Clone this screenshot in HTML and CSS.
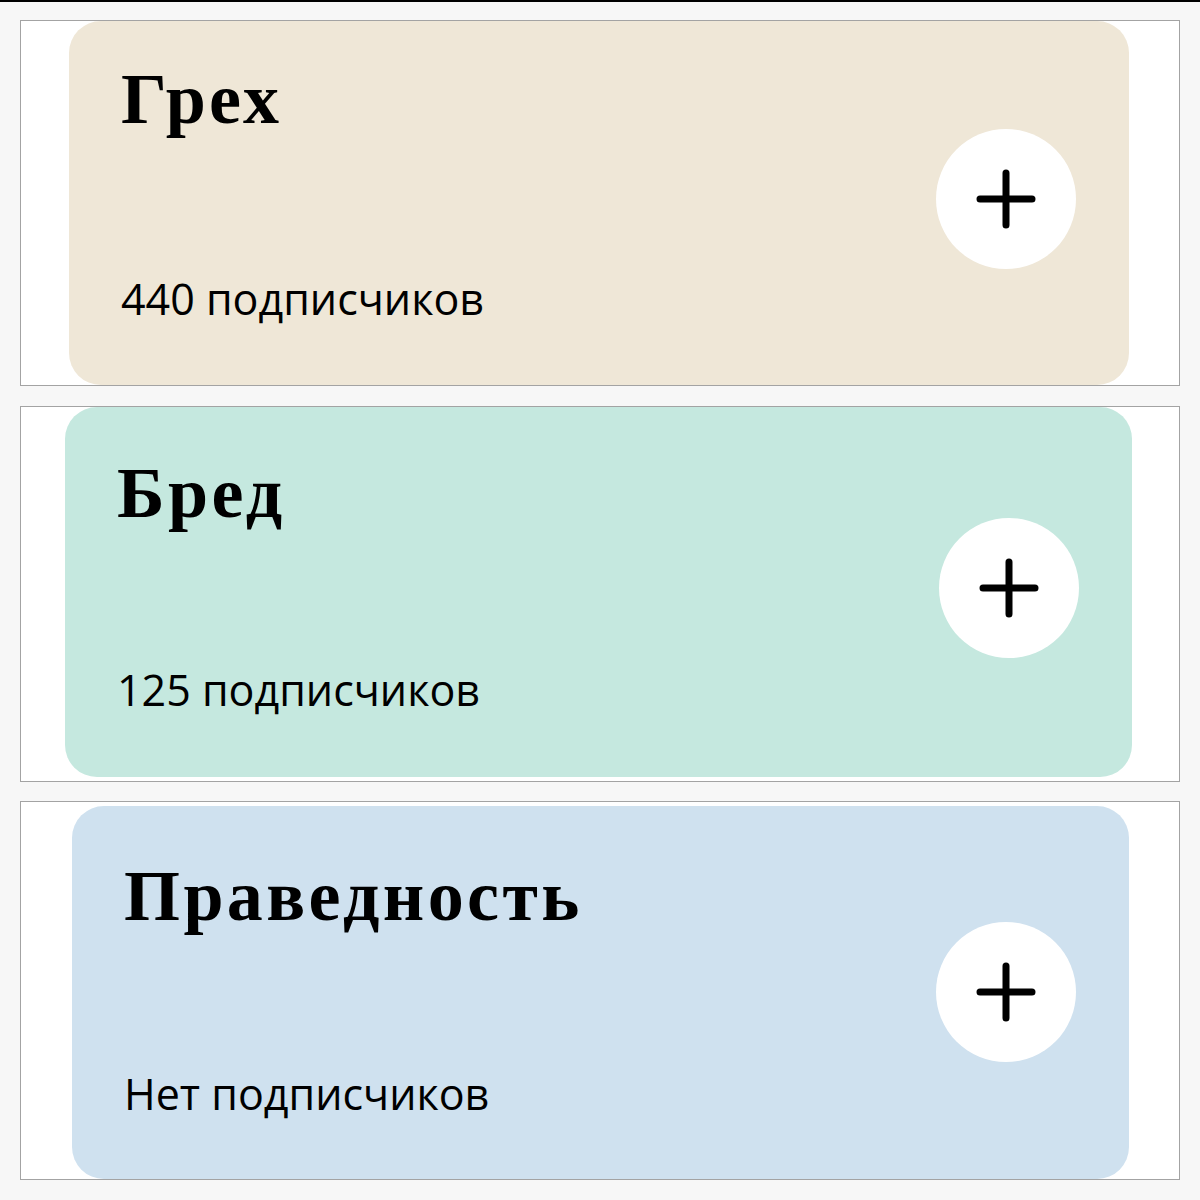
FILE: index.html
```html
<!DOCTYPE html>
<html lang="ru">
<head>
<meta charset="utf-8">
<title>Каналы</title>
<link rel="stylesheet" href="styles.css">
</head>
<body>
<main class="page">
  <section class="panel panel-1">
    <div class="card card-sin">
      <div class="info">
        <h2 class="title">Грех</h2>
        <p class="subs">440 подписчиков</p>
      </div>
      <button class="add" aria-label="Подписаться">
        <svg viewBox="0 0 60 60" width="60" height="60"><path d="M30 4V56M4 30H56" stroke="#000" stroke-width="7" stroke-linecap="round" fill="none"/></svg>
      </button>
    </div>
  </section>
  <section class="panel panel-2">
    <div class="card card-nonsense">
      <div class="info">
        <h2 class="title">Бред</h2>
        <p class="subs">125 подписчиков</p>
      </div>
      <button class="add" aria-label="Подписаться">
        <svg viewBox="0 0 60 60" width="60" height="60"><path d="M30 4V56M4 30H56" stroke="#000" stroke-width="7" stroke-linecap="round" fill="none"/></svg>
      </button>
    </div>
  </section>
  <section class="panel panel-3">
    <div class="card card-righteous">
      <div class="info">
        <h2 class="title">Праведность</h2>
        <p class="subs">Нет подписчиков</p>
      </div>
      <button class="add" aria-label="Подписаться">
        <svg viewBox="0 0 60 60" width="60" height="60"><path d="M30 4V56M4 30H56" stroke="#000" stroke-width="7" stroke-linecap="round" fill="none"/></svg>
      </button>
    </div>
  </section>
</main>
</body>
</html>
```
FILE: styles.css
```css
html, body {
  margin: 0;
  padding: 0;
}
body {
  background: #f7f7f7;
  border-top: 2px solid #000;
  min-height: 1198px;
  box-sizing: border-box;
}
.page {
  padding: 18px 20px 0 20px;
  display: flex;
  flex-direction: column;
  gap: 20px;
}
.panel {
  background: #fff;
  border: 1px solid #a3a3a3;
  box-sizing: border-box;
  display: flex;
}
.panel-1 { height: 366px; padding: 0 50px 0 48px; }
.panel-2 { height: 376px; padding: 0 47px 4px 44px; }
.panel-3 { height: 379px; padding: 4px 50px 0 51px; margin-top: -1px; }

.card {
  flex: 1;
  border-radius: 32px;
  display: flex;
  align-items: center;
  padding: 0 53px 0 52px;
}
.card-sin { background: #efe7d7; }
.card-nonsense { background: #c5e8df; }
.card-righteous { background: #cfe1ef; }

.info {
  align-self: stretch;
  display: flex;
  flex-direction: column;
  justify-content: space-between;
  padding: 42px 0 65px;
}
.card-nonsense .info { padding-top: 50px; padding-bottom: 66px; }
.card-righteous .info { padding-top: 54px; padding-bottom: 64px; }

.title {
  margin: 0;
  font-family: "Liberation Serif", serif;
  font-weight: 700;
  font-size: 72px;
  line-height: 1;
  color: #000;
  letter-spacing: 3.4px;
}
.subs {
  margin: 0;
  font-family: "Open Sans", sans-serif;
  font-size: 43px;
  line-height: 1;
  color: #000;
}
.add {
  margin-left: auto;
  margin-bottom: 8px;
  width: 140px;
  height: 140px;
  border: none;
  border-radius: 50%;
  background: #fff;
  padding: 0;
  display: flex;
  align-items: center;
  justify-content: center;
  flex-shrink: 0;
}
.card-righteous .add { margin-bottom: 2px; }
```
